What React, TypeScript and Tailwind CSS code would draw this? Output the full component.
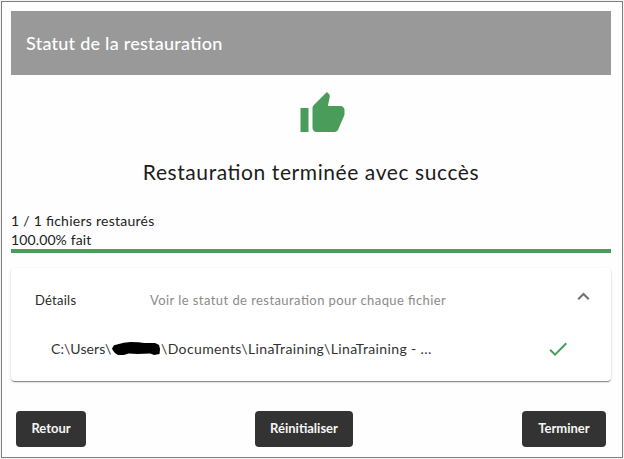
import React from "react";

function ActionButton({ label, className }: { label: string; className: string }) {
  return (
    <button
      type="button"
      className={`h-9 rounded-[4px] bg-[#333333] pb-px text-center text-[13px] font-bold leading-[35px] text-[#f5f5f5] ${className}`}
    >
      {label}
    </button>
  );
}

function FilePath() {
  return (
    <div className="flex h-5 items-center whitespace-nowrap text-[14px] leading-5 text-[#333333]">
      <span className="w-[61px] tracking-[0.1px]">C:\Users\</span>
      <svg width="49" height="16" viewBox="0 0 50 16" fill="#000" className="shrink-0">
        <path d="M0 7.5 2 4.2 7 3 12 1.5 19 .8 27 1 33 2 44 2 48 4 49 8 48.5 13 43 14 39 12.5 26 13 17 12.5 12 14 6 14.2 3 12 1 9.5Z" />
      </svg>
      <span className="tracking-[0.37px]">\Documents\LinaTraining\LinaTraining - ...</span>
    </div>
  );
}

export default function App() {
  return (
    <div className="h-[459px] w-[624px] overflow-hidden bg-[#f3f3f3] p-px font-['Lato','Liberation_Sans',sans-serif] [font-feature-settings:'liga'_1]">
      <main className="flex h-[457px] w-[622px] flex-col border border-[#7f7f7f] bg-[#fefefe] px-[9px] pt-[9px]">
        <header className="flex h-16 w-[600px] shrink-0 items-center bg-[#999999] pl-[15px] text-[18px] font-medium leading-6 tracking-[0.25px] text-white">
          <h1>Statut de la restauration</h1>
        </header>

        <section className="flex w-[600px] flex-col items-center pt-[15px]">
          <svg width="48" height="48" viewBox="-0.25 0 24 24" fill="#4a9c5a" className="ml-[22px] overflow-visible">
            <path d="M1 21h4V9H1v12zm22-11c0-1.1-.9-2-2-2h-6.31l.95-4.57.03-.32c0-.41-.17-.79-.44-1.06L14.17 1 7.59 7.59C7.22 7.95 7 8.45 7 9v10c0 1.1.9 2 2 2h9c.83 0 1.54-.5 1.84-1.22l3.02-7.05c.09-.23.14-.47.14-.73v-2z" />
          </svg>
          <h2 className="mt-[20px] whitespace-nowrap text-[21px] leading-7 tracking-[0.58px] text-[#1c1c1c]">
            Restauration terminée avec succès
          </h2>
        </section>

        <section className="mt-[25px] w-[600px] text-[14px] leading-[19px] text-[#222222]">
          <p className="tracking-[0.26px]">1 / 1 fichiers restaurés</p>
          <p className="tracking-[0.12px]">100.00% fait</p>
          <div className="h-1 w-full bg-[#4a9c5a]" />
        </section>

        <section className="mt-[15px] h-[113px] w-[600px] shrink-0 rounded-[4px] bg-white pl-6 shadow-[0_2px_1px_-1px_rgba(0,0,0,0.28),0_1px_1px_0_rgba(0,0,0,0.2),0_1px_3px_0_rgba(0,0,0,0.14)]">
          <div className="flex h-[66px] items-center text-[13px]">
            <span className="w-[115px] tracking-[0.25px] text-[#2a2a2a]">Détails</span>
            <span className="w-[421px] tracking-[0.43px] text-[#8a8a8a]">Voir le statut de restauration pour chaque fichier</span>
            <svg width="24" height="24" viewBox="0 0 24 24" fill="none" stroke="#757575" strokeWidth="2.2" className="mb-2">
              <path d="M7.2 14.3 12.5 9l5.3 5.3" />
            </svg>
          </div>
          <div className="flex items-center pl-4 pt-[3px]">
            <div className="w-[495px]">
              <FilePath />
            </div>
            <svg width="24" height="24" viewBox="0 0 24 24" fill="#4a9c5a">
              <path d="M9 16.17 4.83 12l-1.42 1.41L9 19 21 7l-1.41-1.41z" />
            </svg>
          </div>
        </section>

        <footer className="ml-[5px] mt-[30px] flex w-[590px] justify-between">
          <ActionButton label="Retour" className="w-[70px]" />
          <ActionButton label="Réinitialiser" className="w-[98px]" />
          <ActionButton label="Terminer" className="w-[84px]" />
        </footer>
      </main>
    </div>
  );
}
